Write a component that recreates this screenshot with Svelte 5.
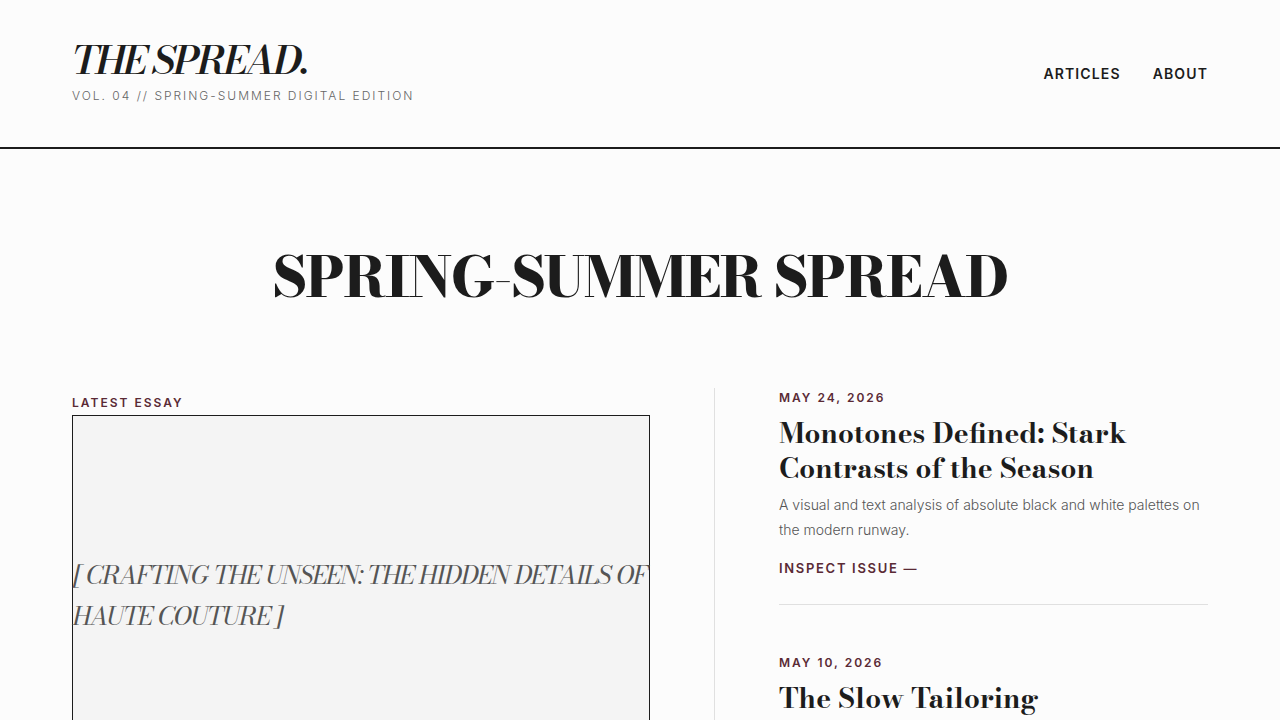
<script lang="ts">
	const links = [
		{ label: 'Articles', href: '#articles' },
		{ label: 'About', href: '#about' }
	];

	const issues = [
		{
			date: 'May 24, 2026',
			title: 'Monotones Defined: Stark Contrasts of the Season',
			text: 'A visual and text analysis of absolute black and white palettes on the modern runway.'
		},
		{ date: 'May 10, 2026', title: 'The Slow Tailoring', text: '' }
	];
</script>

<header class="masthead">
	<div>
		<a class="logo" href="#top">The Spread.</a>
		<p class="edition">Vol. 04 // Spring-Summer Digital Edition</p>
	</div>
	<nav>
		{#each links as link}
			<a href={link.href}>{link.label}</a>
		{/each}
	</nav>
</header>

<main>
	<h1>Spring-Summer Spread</h1>

	<div class="spread">
		<section class="feature">
			<span class="label">Latest Essay</span>
			<div class="cover">
				<p>[ Crafting the Unseen: The Hidden Details of Haute Couture ]</p>
			</div>
		</section>

		<section class="issues" id="articles">
			{#each issues as issue}
				<article>
					<span class="label">{issue.date}</span>
					<h2>{issue.title}</h2>
					{#if issue.text}
						<p>{issue.text}</p>
						<a class="label inspect" href="#articles">Inspect Issue —</a>
					{/if}
				</article>
			{/each}
		</section>
	</div>
</main>

<style>
	:global(body) {
		background: #fcfcfc;
		color: #1c1c1c;
		font-family: Inter, sans-serif;
		font-weight: 300;
	}

	h1,
	h2,
	p {
		margin: 0;
	}

	.masthead {
		display: flex;
		justify-content: space-between;
		align-items: center;
		padding: 40px 72px;
		border-bottom: 2px solid #1c1c1c;
	}

	.logo {
		display: block;
		font-family: 'Bodoni Moda', 'Liberation Serif', serif;
		font-size: 39px;
		font-style: italic;
		font-weight: 600;
		line-height: 40px;
		letter-spacing: -0.05em;
		text-transform: uppercase;
		text-decoration: none;
		color: inherit;
	}

	.edition {
		font-size: 12px;
		line-height: 22px;
		letter-spacing: 2px;
		margin-top: 5px;
		text-transform: uppercase;
		color: #666;
	}

	nav {
		display: flex;
		gap: 32px;
	}

	nav a {
		font-size: 14px;
		font-weight: 600;
		letter-spacing: 0.08em;
		text-transform: uppercase;
		text-decoration: none;
		color: inherit;
	}

	main {
		padding: 80px 72px 0;
	}

	h1 {
		font-family: 'Bodoni Moda', 'Liberation Serif', serif;
		font-size: 56px;
		font-weight: 800;
		line-height: 95px;
		letter-spacing: -0.03em;
		text-align: center;
		text-transform: uppercase;
	}

	.spread {
		display: grid;
		grid-template-columns: 117fr 100fr;
		gap: 64px;
		margin-top: 64px;
	}

	.label {
		font-size: 12px;
		font-weight: 600;
		line-height: 20px;
		letter-spacing: 2px;
		text-transform: uppercase;
		color: #5a2a35;
	}

	.feature {
		display: flex;
		flex-direction: column;
		padding-top: 5px;
	}

	.cover {
		display: flex;
		align-items: center;
		aspect-ratio: 8 / 5;
		margin-top: 2px;
		border: 1px solid #1c1c1c;
		background: #f4f4f4;
	}

	.cover p {
		font-family: 'Bodoni Moda', 'Liberation Serif', serif;
		font-size: 25px;
		font-style: italic;
		font-weight: 400;
		line-height: 41px;
		letter-spacing: -0.03em;
		text-transform: uppercase;
		color: #555;
	}

	.issues {
		padding-left: 64px;
		border-left: 1px solid #e0e0e0;
	}

	article {
		display: flex;
		flex-direction: column;
		align-items: flex-start;
		padding-bottom: 26px;
		margin-bottom: 48px;
		border-bottom: 1px solid #e0e0e0;
	}

	h2 {
		font-family: 'Bodoni Moda', 'Liberation Serif', serif;
		font-size: 28px;
		font-weight: 700;
		line-height: 35px;
		margin: 7px 0;
	}

	article p {
		font-size: 14px;
		line-height: 25px;
		color: #555;
	}

	.inspect {
		margin-top: 16px;
		font-size: 13px;
		letter-spacing: 0.13em;
		text-decoration: none;
	}
</style>
